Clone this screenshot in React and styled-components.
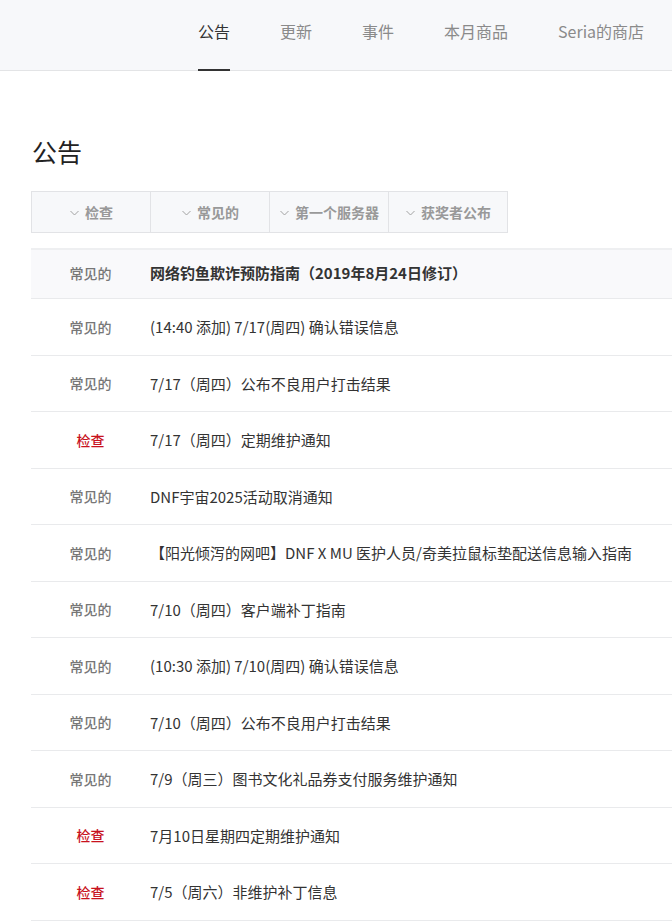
import React from "react";
import styled, { createGlobalStyle } from "styled-components";

const Global = createGlobalStyle`
  html, body { margin: 0; padding: 0; background: #fff; }
  body {
    font-family: "Noto Sans CJK SC", "Noto Sans", sans-serif;
    overflow: hidden;
    width: 672px;
  }
`;

const Header = styled.header`
  height: 71px;
  background: #f7f8fa;
  border-bottom: 1px solid #e3e4e6;
  box-sizing: border-box;
`;

const Nav = styled.nav`
  display: flex;
  height: 100%;
  padding-left: 198px;
  gap: 50px;
`;

const NavItem = styled.a`
  position: relative;
  display: flex;
  align-items: center;
  height: 100%;
  padding-bottom: 8px;
  box-sizing: border-box;
  font-size: 16px;
  white-space: nowrap;
  color: ${(p) => (p.$active ? "#333" : "#8a8a8a")};
  text-decoration: none;
  &::after {
    content: "";
    display: ${(p) => (p.$active ? "block" : "none")};
    position: absolute;
    left: 0;
    right: 0;
    bottom: -1px;
    height: 2px;
    background: #333;
  }
`;

const Main = styled.main`
  padding: 62px 0 0 31px;
`;

const Title = styled.h1`
  margin: 0 0 22px 1px;
  font-size: 25px;
  font-weight: 400;
  color: #222;
  line-height: 36px;
`;

const Filters = styled.div`
  display: flex;
  width: fit-content;
  border: 1px solid #e2e3e6;
  background: #f7f8fa;
`;

const FilterButton = styled.button`
  width: 119px;
  height: 40px;
  display: flex;
  align-items: center;
  justify-content: center;
  gap: 5px;
  border: none;
  border-left: ${(p) => (p.$first ? "none" : "1px solid #e2e3e6")};
  background: transparent;
  font-family: inherit;
  font-size: 14px;
  font-weight: 700;
  color: #999;
  padding: 0;
  box-sizing: border-box;
  &:first-child { width: 118px; }
`;

const Chevron = () => (
  <svg width="11" height="11" viewBox="0 0 11 11" fill="none">
    <path d="M1.5 4 L5.5 8 L9.5 4" stroke="#a3a3a3" strokeWidth="1" />
  </svg>
);

const List = styled.ul`
  list-style: none;
  margin: 15px 0 0;
  padding: 0;
  border-top: 2px solid #eeeff1;
  width: 800px;
`;

const Row = styled.li`
  display: flex;
  align-items: center;
  height: ${(p) => (p.$pinned ? "49px" : "56.5px")};
  padding-bottom: ${(p) => (p.$pinned ? "3px" : "0")};
  box-sizing: border-box;
  border-bottom: 1px solid #e9eaec;
  background: ${(p) => (p.$pinned ? "#f9f9fb" : "#fff")};
`;

const Category = styled.span`
  width: 119px;
  flex: none;
  text-align: center;
  font-size: 14px;
  font-weight: 500;
  color: ${(p) => (p.$red ? "#c8121e" : "#777")};
`;

const RowTitle = styled.span`
  font-size: 15px;
  color: #333;
  font-weight: ${(p) => (p.$bold ? 700 : 400)};
  white-space: nowrap;
`;

const navItems = ["公告", "更新", "事件", "本月商品", "Seria的商店"];
const filters = ["检查", "常见的", "第一个服务器", "获奖者公布"];

const rows = [
  { cat: "常见的", title: "网络钓鱼欺诈预防指南（2019年8月24日修订）", pinned: true },
  { cat: "常见的", title: "(14:40 添加) 7/17(周四) 确认错误信息" },
  { cat: "常见的", title: "7/17（周四）公布不良用户打击结果" },
  { cat: "检查", title: "7/17（周四）定期维护通知", red: true },
  { cat: "常见的", title: "DNF宇宙2025活动取消通知" },
  { cat: "常见的", title: "【阳光倾泻的网吧】DNF X MU 医护人员/奇美拉鼠标垫配送信息输入指南" },
  { cat: "常见的", title: "7/10（周四）客户端补丁指南" },
  { cat: "常见的", title: "(10:30 添加) 7/10(周四) 确认错误信息" },
  { cat: "常见的", title: "7/10（周四）公布不良用户打击结果" },
  { cat: "常见的", title: "7/9（周三）图书文化礼品券支付服务维护通知" },
  { cat: "检查", title: "7月10日星期四定期维护通知", red: true },
  { cat: "检查", title: "7/5（周六）非维护补丁信息", red: true },
];

export default function App() {
  return (
    <>
      <Global />
      <Header>
        <Nav>
          {navItems.map((n, i) => (
            <NavItem key={n} $active={i === 0}>
              {n}
            </NavItem>
          ))}
        </Nav>
      </Header>
      <Main>
        <Title>公告</Title>
        <Filters>
          {filters.map((f, i) => (
            <FilterButton key={f} $first={i === 0}>
              <Chevron />
              {f}
            </FilterButton>
          ))}
        </Filters>
        <List>
          {rows.map((r, i) => (
            <Row key={i} $pinned={r.pinned}>
              <Category $red={r.red}>{r.cat}</Category>
              <RowTitle $bold={r.pinned}>{r.title}</RowTitle>
            </Row>
          ))}
        </List>
      </Main>
    </>
  );
}
